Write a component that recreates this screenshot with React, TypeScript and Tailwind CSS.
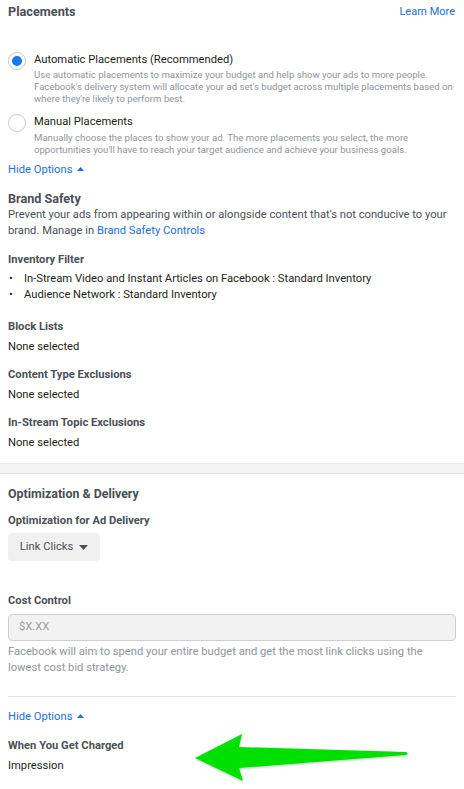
const font = { fontFamily: "Roboto, 'Liberation Sans', sans-serif" };

const Radio = ({ checked }: { checked?: boolean }) => (
  <div className="w-[18px] h-[18px] rounded-full border border-[#ccd0d5] bg-white flex items-center justify-center shrink-0 shadow-[0_0_1px_rgba(0,0,0,0.1)]">
    {checked && <div className="w-[10px] h-[10px] rounded-full bg-[#1877f2]" />}
  </div>
);

const Caret = () => (
  <svg width="7" height="4" viewBox="0 0 7 4" className="inline-block ml-[5px] mb-[2px]">
    <path d="M0 4 L3.5 0 L7 4 Z" fill="#216fdb" />
  </svg>
);

const HideOptions = ({ className }: { className?: string }) => (
  <div className={"text-[11.2px] leading-4 text-[#216fdb] " + (className ?? "")}>
    Hide Options
    <Caret />
  </div>
);

const Field = ({ label, value, className }: { label: string; value: string; className?: string }) => (
  <div className={className}>
    <div className="text-[11.2px] leading-4 font-bold text-[#4b4f56]">{label}</div>
    <div className="mt-1 text-[11.2px] leading-4 text-[#1c1e21]">{value}</div>
  </div>
);

const Arrow = () => (
  <svg
    className="absolute left-0 top-0 pointer-events-none"
    width="464"
    height="789"
    viewBox="0 0 464 789"
  >
    <defs>
      <filter id="sh" x="-10%" y="-30%" width="120%" height="160%">
        <feDropShadow dx="0" dy="1" stdDeviation="1" floodColor="#000" floodOpacity="0.25" />
      </filter>
    </defs>
    <path
      d="M195 758 L242 734 L239 747 L406 752 Q409 753.5 406 755 L239 768 L243 781 Z"
      fill="#00e000"
      filter="url(#sh)"
    />
  </svg>
);

export default function App() {
  return (
    <div className="relative w-[464px] h-[789px] bg-white overflow-hidden text-[#1c1e21]" style={font}>
      <div className="px-2">
        <div className="pt-1 flex justify-between items-center">
          <h2 className="text-[12.7px] leading-4 font-bold text-[#4b4f56]">Placements</h2>
          <a className="text-[11px] leading-4 text-[#216fdb] pr-[1px]">Learn More</a>
        </div>

        <div className="mt-8 flex gap-2">
          <Radio checked />
          <div>
            <div className="text-[11.2px] leading-4">Automatic Placements (Recommended)</div>
            <p className="mt-[1px] text-[9.6px] leading-3 text-[#90949c]">
              Use automatic placements to maximize your budget and help show your ads to more people.
              Facebook's delivery system will allocate your ad set's budget across multiple placements based on
              where they're likely to perform best.
            </p>
          </div>
        </div>

        <div className="mt-[9px] flex gap-2">
          <Radio />
          <div>
            <div className="text-[11.2px] leading-4">Manual Placements</div>
            <p className="mt-[2px] text-[9.6px] leading-3 text-[#90949c]">
              Manually choose the places to show your ad. The more placements you select, the more
              opportunities you'll have to reach your target audience and achieve your business goals.
            </p>
          </div>
        </div>

        <HideOptions className="mt-[6px]" />

        <h3 className="mt-[13px] text-[12.6px] leading-4 font-bold text-[#4b4f56]">Brand Safety</h3>
        <p className="text-[11.2px] leading-4 text-[#4b4f56]">
          Prevent your ads from appearing within or alongside content that's not conducive to your brand.
          Manage in <span className="text-[#216fdb]">Brand Safety Controls</span>
        </p>

        <div className="mt-[13px] text-[11.2px] leading-4 font-bold text-[#4b4f56]">Inventory Filter</div>
        <ul className="mt-[3px] text-[11.2px] leading-4 text-[#1c1e21]">
          <li className="flex">
            <span className="w-4 pl-[1px]">•</span>
            In-Stream Video and Instant Articles on Facebook : Standard Inventory
          </li>
          <li className="flex">
            <span className="w-4 pl-[1px]">•</span>
            Audience Network : Standard Inventory
          </li>
        </ul>

        <Field className="mt-4" label="Block Lists" value="None selected" />
        <Field className="mt-3" label="Content Type Exclusions" value="None selected" />
        <Field className="mt-3" label="In-Stream Topic Exclusions" value="None selected" />
      </div>

      <div className="mt-3 h-[11px] bg-[#f2f3f5] border-t border-[#e9eaed] shadow-[inset_0_-1px_0_#e5e6e9]" />

      <div className="px-2">
        <h3 className="mt-3 text-[12.4px] leading-4 font-bold text-[#4b4f56]">Optimization &amp; Delivery</h3>
        <div className="mt-[11px] text-[11.2px] leading-4 font-bold text-[#4b4f56]">Optimization for Ad Delivery</div>
        <button className="mt-1 h-7 w-[92px] rounded-[4px] bg-[#f0f0f0] flex items-center justify-center gap-[6px] text-[11.2px] text-[#4b4f56]">
          Link Clicks
          <svg width="9" height="5" viewBox="0 0 9 5">
            <path d="M0 0 L9 0 L4.5 5 Z" fill="#4b4f56" />
          </svg>
        </button>

        <div className="mt-8 text-[11.2px] leading-4 font-bold text-[#4b4f56]">Cost Control</div>
        <div className="mt-[5px] h-[27px] rounded-[4px] border border-[#ccd0d5] bg-[#f2f2f2] flex items-center px-[10px] text-[11.2px] text-[#9a9ea4]">
          $X.XX
        </div>
        <p className="mt-[3px] pr-6 text-[11.2px] leading-4 text-[#90949c]">
          Facebook will aim to spend your entire budget and get the most link clicks using the lowest cost bid
          strategy.
        </p>

        <div className="mt-5 h-px bg-[#dddfe2]" />

        <HideOptions className="mt-3" />
        <Field className="mt-[13px]" label="When You Get Charged" value="Impression" />
      </div>

      <Arrow />
    </div>
  );
}
